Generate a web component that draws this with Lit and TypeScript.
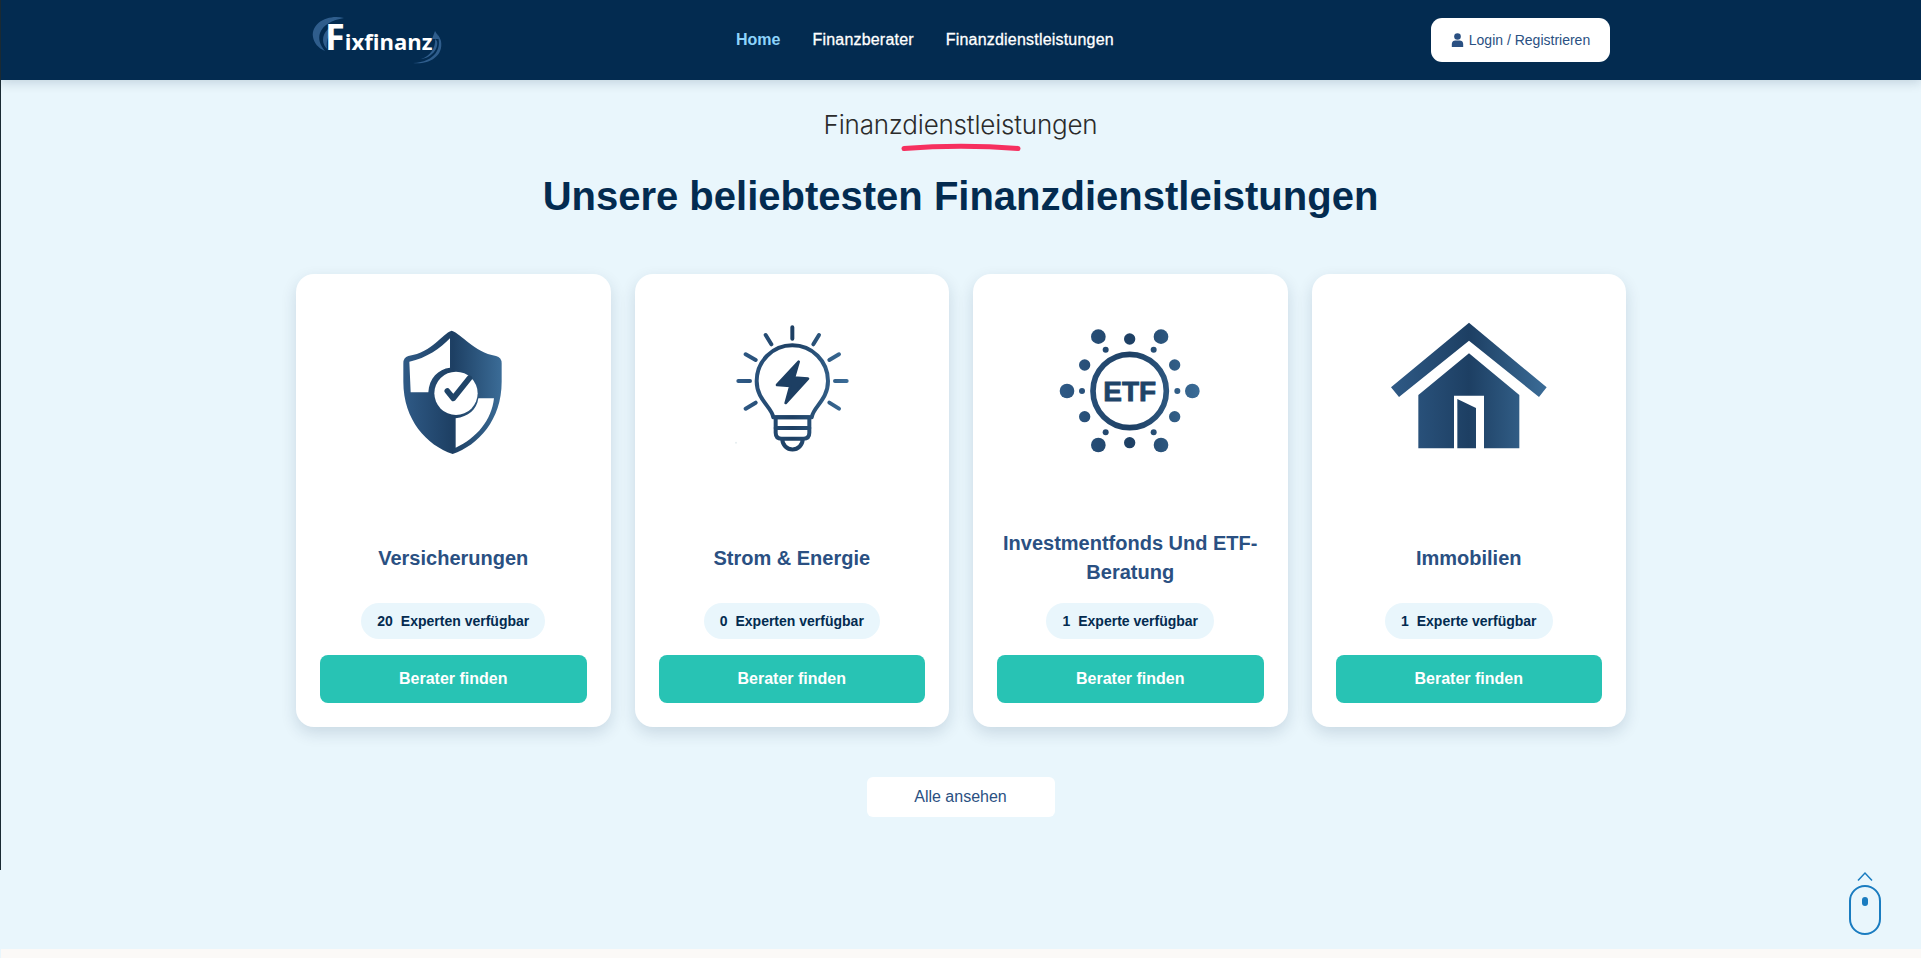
import { LitElement, html, css, svg } from "lit";
import { customElement } from "lit/decorators.js";

const gradient = (id: string, x1: number, x2: number) => svg`
  <defs>
    <linearGradient id=${id} gradientUnits="userSpaceOnUse" x1=${x1} y1="0" x2=${x2} y2="0">
      <stop offset="0" stop-color="#2f5a86" />
      <stop offset="0.5" stop-color="#1d3f63" />
      <stop offset="1" stop-color="#3b6c97" />
    </linearGradient>
  </defs>`;

const shieldIcon = html`<svg viewBox="-6 0 510 480" width="170" height="160">
  ${gradient("g-shield", 100, 395)}
  <path
    fill="url(#g-shield)"
    d="M245 62C215 72 190 125 115 138Q100 142 100 160L100 215C100 330 170 405 248 432C325 405 395 330 395 215L395 160Q395 142 378 138C310 125 275 72 245 62Z"
  />
  <path fill="#fff" d="M240 85C210 115 170 145 118 155L122 247L175 247C177 205 205 177 240 173Z" />
  <path fill="#fff" d="M372 265L325 265C320 300 295 320 257 325L257 413C320 385 365 330 372 265Z" />
  <circle cx="258" cy="250" r="65" fill="#fff" />
  <path
    d="M232 243L250 265L298 205"
    fill="none"
    stroke="#1f4468"
    stroke-width="17"
    stroke-linecap="round"
    stroke-linejoin="round"
  />
</svg>`;

const bulbIcon = html`<svg viewBox="-9 0 510 480" width="170" height="160">
  ${gradient("g-bulb", 85, 410)}
  <g fill="none" stroke="url(#g-bulb)" stroke-width="12" stroke-linecap="round" stroke-linejoin="round">
    <path d="M190 322C185 290 140 270 140 213A107 107 0 0 1 354 213C354 270 310 290 305 322Z" />
    <path d="M197 322H298V368Q298 386 280 386H215Q197 386 197 368Z" />
    <path d="M197 354H298" />
    <path d="M217 388A30 30 0 0 0 278 388" />
    <path d="M247 52V86M167 75L184 103M107 133L137 150M85 213H120M107 296L137 278" />
    <path d="M327 75L310 103M387 133L358 150M410 213H375M387 296L358 278" />
  </g>
  <path
    fill="#1d3f63"
    stroke="#1d3f63"
    stroke-width="8"
    stroke-linejoin="round"
    d="M266 155L201 225L241 228L227 279L294 206L252 203Z"
  />
  <circle cx="78" cy="398" r="3" fill="#e6eef0" />
</svg>`;

const etfDots: [number, number, number][] = [
  [176, 80, 22], [364, 80, 22], [82, 243, 22], [458, 243, 22], [176, 405, 22], [364, 405, 22],
  [270, 87, 17], [135, 165, 17], [405, 165, 17], [135, 320, 17], [405, 320, 17], [270, 398, 17],
  [198, 119, 9], [342, 119, 9], [127, 243, 9], [413, 243, 9], [198, 367, 9], [342, 367, 9],
];

const etfIcon = html`<svg viewBox="16 0 510 480" width="170" height="160">
  ${gradient("g-etf", 60, 480)}
  ${etfDots.map(([cx, cy, r]) => svg`<circle cx=${cx} cy=${cy} r=${r} fill="url(#g-etf)" />`)}
  <circle cx="270" cy="243" r="110" fill="none" stroke="url(#g-etf)" stroke-width="17" />
  <text
    x="270"
    y="273"
    text-anchor="middle"
    fill="#1f4468"
    stroke="#1f4468"
    stroke-width="2.5"
    font-family="'Liberation Sans', sans-serif"
    font-weight="700"
    font-size="84"
    >ETF</text
  >
</svg>`;

const houseIcon = html`<svg viewBox="12 0 510 480" width="170" height="160">
  ${gradient("g-house", 33, 500)}
  <path fill="url(#g-house)" d="M267 38L500 232L477 261L267 92L57 261L33 232Z" />
  <path fill="url(#g-house)" d="M267 130L418 255V415H312V257H222V415H115V255Z" />
  <path fill="url(#g-house)" d="M232 267L288 294V415H232Z" />
</svg>`;

const logo = html`<div class="logo">
  <svg viewBox="0 0 140 70" width="140" height="70">
    <g fill="#2f5d8c">
      <path d="M36 13C20 9 3 18 5 32C6 38 10 43 17 46C12 40 10 34 12 28C15 20 24 15 36 13Z" />
      <path d="M31 19C22 20 15 27 15 35C15 39 17 42 19 44C18 36 20 26 31 19Z" />
      <path d="M129 29C135 43 127 57 105 58C118 60 136 53 133 36C132 33 131 31 129 29Z" />
      <path d="M127 34C128 43 122 51 113 54C123 53 131 44 129 36Z" />
      <path d="M127 26L132 34L124 34Z" />
    </g>
  </svg>
  <span class="logo-text"><span class="logo-f">F</span>ixfinanz</span>
</div>`;

const services = [
  { title: "Versicherungen", count: "20", label: "Experten verfügbar", icon: shieldIcon },
  { title: "Strom & Energie", count: "0", label: "Experten verfügbar", icon: bulbIcon },
  { title: "Investmentfonds Und ETF-Beratung", count: "1", label: "Experte verfügbar", icon: etfIcon },
  { title: "Immobilien", count: "1", label: "Experte verfügbar", icon: houseIcon },
];

@customElement("app-root")
export class AppRoot extends LitElement {
  static styles = css`
    :host {
      display: block;
      height: 958px;
      overflow: hidden;
      position: relative;
      background: #e9f6fc;
      font-family: "Liberation Sans", Arial, sans-serif;
      color: #032b50;
    }

    * {
      box-sizing: border-box;
    }

    .edge {
      position: absolute;
      left: 0;
      top: 0;
      width: 1px;
      height: 870px;
      background: #1a2a33;
    }

    header {
      height: 80px;
      background: #032b50;
      display: flex;
      align-items: center;
      padding: 0 311px 0 308px;
      box-shadow: 0 3px 10px rgba(3, 43, 80, 0.16);
      position: relative;
    }

    .logo {
      width: 140px;
      height: 70px;
      position: relative;
      flex: none;
    }

    .logo svg {
      display: block;
    }

    .logo-text {
      position: absolute;
      left: 17px;
      top: 13px;
      font-family: "Open Sans", sans-serif;
      font-weight: 700;
      font-size: 22px;
      line-height: 46px;
      color: #fff;
      white-space: nowrap;
    }

    .logo-f {
      font-size: 36px;
      line-height: 0;
    }

    nav {
      display: flex;
      gap: 32px;
      margin-left: 288px;
      font-size: 16px;
      letter-spacing: 0.2px;
      color: #fff;
      -webkit-text-stroke: 0.3px #fff;
    }

    nav .active {
      color: #8ed4fb;
      font-weight: 700;
      letter-spacing: 0;
      -webkit-text-stroke: 0;
    }

    .login {
      margin-left: auto;
      width: 179px;
      height: 44px;
      background: #fff;
      border-radius: 11px;
      display: flex;
      align-items: center;
      justify-content: center;
      gap: 5px;
      font-size: 14px;
      color: #2a5082;
    }

    .intro {
      display: flex;
      flex-direction: column;
      align-items: center;
      padding-top: 29px;
    }

    .eyebrow {
      font-family: Inter, sans-serif;
      font-weight: 300;
      font-size: 26px;
      line-height: 32px;
      letter-spacing: -0.2px;
      color: #2b2b2b;
    }

    .swoosh {
      display: block;
      margin-top: 2px;
    }

    h1 {
      margin: 19px 0 0;
      font-size: 40px;
      line-height: 52px;
      font-weight: 700;
      color: #032b50;
    }

    .cards {
      display: grid;
      grid-template-columns: repeat(4, 1fr);
      gap: 24px;
      width: 1330px;
      margin: 52px 0 0 296px;
    }

    .card {
      height: 453px;
      background: #fff;
      border-radius: 18px;
      box-shadow: 0 6px 16px rgba(3, 43, 80, 0.14);
      padding: 36px 24px 24px;
      display: flex;
      flex-direction: column;
      align-items: center;
    }

    .card svg {
      display: block;
      flex: none;
    }

    .title {
      height: 60px;
      margin-top: 58px;
      display: flex;
      align-items: center;
      text-align: center;
      font-size: 20px;
      line-height: 29px;
      font-weight: 700;
      color: #2a5082;
    }

    .pill {
      margin-top: auto;
      height: 36px;
      padding: 0 16px;
      border-radius: 18px;
      background: #e9f6fc;
      display: flex;
      align-items: center;
      gap: 8px;
      font-size: 14px;
      font-weight: 700;
      color: #032b50;
      flex: none;
    }

    .find {
      margin-top: 16px;
      width: 100%;
      height: 48px;
      border-radius: 8px;
      background: #28c3b4;
      display: flex;
      align-items: center;
      justify-content: center;
      font-size: 16px;
      font-weight: 700;
      color: #fff;
      flex: none;
    }

    .all {
      width: 188px;
      height: 40px;
      margin: 50px auto 0;
      background: #fff;
      border-radius: 6px;
      display: flex;
      align-items: center;
      justify-content: center;
      font-size: 16px;
      color: #2a5082;
    }

    .scroll {
      position: absolute;
      right: 38px;
      top: 870px;
      display: block;
    }

    .strip {
      position: absolute;
      left: 1px;
      right: 0;
      bottom: 0;
      height: 9px;
      background: #fbf9f7;
    }
  `;

  render() {
    return html`
      <header>
        ${logo}
        <nav>
          <span class="active">Home</span>
          <span>Finanzberater</span>
          <span>Finanzdienstleistungen</span>
        </nav>
        <div class="login">
          <svg viewBox="0 0 14 16" width="13" height="14" fill="#2a5082">
            <circle cx="7" cy="4" r="3.8" />
            <path d="M0.5 16V12.5C0.5 10 2.5 8.7 4.5 8.7H9.5C11.5 8.7 13.5 10 13.5 12.5V16Z" />
          </svg>
          Login / Registrieren
        </div>
      </header>
      <section class="intro">
        <div class="eyebrow">Finanzdienstleistungen</div>
        <svg class="swoosh" viewBox="0 0 120 8" width="120" height="8">
          <path
            d="M3 5.5Q60 1 117 5.5"
            fill="none"
            stroke="#f6305f"
            stroke-width="5"
            stroke-linecap="round"
          />
        </svg>
        <h1>Unsere beliebtesten Finanzdienstleistungen</h1>
      </section>
      <section class="cards">
        ${services.map(
          (s) => html`<article class="card">
            ${s.icon}
            <div class="title"><span>${s.title}</span></div>
            <div class="pill"><span>${s.count}</span><span>${s.label}</span></div>
            <div class="find">Berater finden</div>
          </article>`,
        )}
      </section>
      <div class="all">Alle ansehen</div>
      <div class="edge"></div>
      <svg class="scroll" viewBox="0 0 36 68" width="36" height="68" fill="none" stroke="#1a7cc0">
        <path d="M11 10.5L18 3L25 10.5" stroke-width="1.5" />
        <rect x="3" y="16" width="30" height="48" rx="15" stroke-width="2" />
        <rect x="15" y="27" width="6" height="9" rx="3" fill="#1a7cc0" stroke="none" />
      </svg>
      <div class="strip"></div>
    `;
  }
}
